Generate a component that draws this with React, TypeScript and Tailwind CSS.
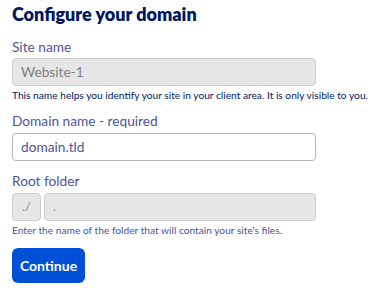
export default function App() {
  return (
    <div className="px-3 pt-[2px] font-['Lato','Noto_Sans',sans-serif]">
      <h2 className="text-[18px] leading-[24px] font-extrabold text-[#00185e]">Configure your domain</h2>

      <label className="mt-[11px] block text-[13.7px] leading-[20px] text-[#4d5693]">Site name</label>
      <div className="mt-[1px] flex h-[28px] w-[304px] items-center rounded-[4px] border border-[#cccccc] bg-[#e6e6e6] px-2 text-[13.7px] text-[#808080]">
        Website-1
      </div>
      <p className="mt-[2px] whitespace-nowrap text-[10.2px] leading-[14px] text-[#00185e]">
        This name helps you identify your site in your client area. It is only visible to you.
      </p>

      <label className="mt-[9px] block text-[13.7px] leading-[20px] text-[#4d5693]">Domain name - required</label>
      <div className="mt-[2px] flex h-[28px] w-[304px] items-center rounded-[4px] border border-[#b3b3b3] bg-white px-2 text-[13.7px] text-[#4d5693]">
        domain.tld
      </div>

      <label className="mt-[10px] block text-[13.7px] leading-[20px] text-[#4d5693]">Root folder</label>
      <div className="mt-[2px] flex w-[304px] gap-[3px]">
        <div className="flex h-[28px] w-[29px] items-center justify-center rounded-[4px] border border-[#cccccc] bg-[#e6e6e6] text-[12px] text-[#808080]">
          ./
        </div>
        <div className="flex h-[28px] flex-1 items-center rounded-[4px] border border-[#cccccc] bg-[#e6e6e6] px-2 text-[12px] text-[#808080]">
          .
        </div>
      </div>
      <p className="mt-[2px] whitespace-nowrap text-[10.2px] leading-[14px] text-[#4d5693]">
        Enter the name of the folder that will contain your site's files.
      </p>

      <button className="mt-[11px] h-[35px] w-[73px] rounded-[6px] bg-[#0050d7] text-[14px] font-bold text-white">
        Continue
      </button>
    </div>
  );
}
